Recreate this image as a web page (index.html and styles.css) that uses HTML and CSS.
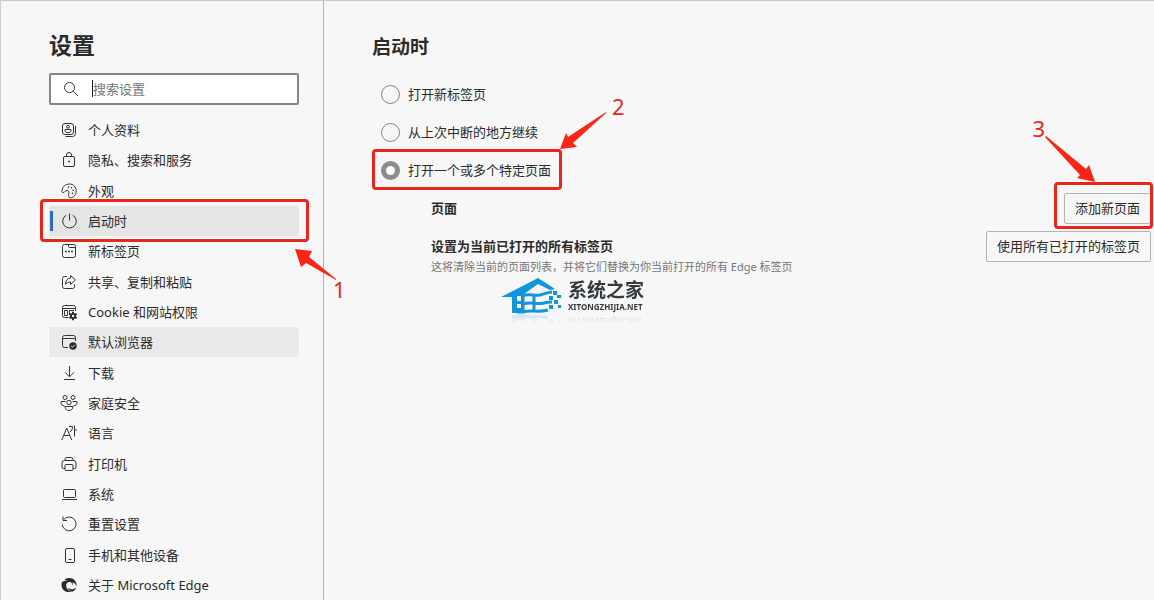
FILE: index.html
```
<!DOCTYPE html>
<html lang="zh-CN">
<head>
    <meta charset="UTF-8">
    <meta name="viewport" content="width=device-width, initial-scale=1.0">
    <title>设置</title>
    <link rel="stylesheet" href="styles.css">
</head>
<body>
    <div class="page">
        <!-- Sidebar -->
        <aside class="sidebar">
            <h1 class="sidebar-title">设置</h1>
            <label class="search">
                <svg class="icon" viewBox="0 0 16 16" aria-hidden="true"><circle cx="6.5" cy="6.5" r="5"/><path d="M10.2 10.2 15 15"/></svg>
                <input type="text" placeholder="搜索设置" aria-label="搜索设置">
            </label>
            <nav class="menu">
                <a class="menu-item" href="#">
                    <svg class="icon" viewBox="0 0 16 16"><rect x="1.5" y="1.5" width="11" height="11" rx="2.5"/><circle cx="7" cy="4.8" r="1.4"/><path d="M4 7.5h6v1.2c0 2.6-6 2.6-6 0zM14.5 4v7.5a3 3 0 0 1-3 3H4.5"/></svg>
                    个人资料
                </a>
                <a class="menu-item" href="#">
                    <svg class="icon" viewBox="0 0 16 16"><rect x="2.500" y="4.500" width="11" height="10" rx="1.500"/><path d="M5.500 4.500V3a2.500 2.500 0 0 1 5 0v1.500"/><circle class="solid" cx="8" cy="9.500" r=".9"/></svg>
                    隐私、搜索和服务
                </a>
                <a class="menu-item" href="#">
                    <svg class="icon" viewBox="0 0 16 16"><path d="M1 7.500C1.500 3.500 4.500 1 8.500 1c4 0 6.700 3 6.700 6.800 0 4-2.700 7-5.500 7-2.400 0-2.400-1.900-1.900-3.700.5-1.900-.2-3.400-1.700-3.600C4.200 7.200 3.600 9.700 2.200 9.700 1.300 9.700.9 8.700 1 7.500z"/><circle class="solid" cx="7.500" cy="4" r=".8"/><circle class="solid" cx="10.500" cy="4.800" r=".8"/><circle class="solid" cx="12.200" cy="7.300" r=".8"/><circle class="solid" cx="11.500" cy="10.200" r=".8"/></svg>
                    外观
                </a>
                <a class="menu-item active" href="#">
                    <svg class="icon" viewBox="0 0 16 16"><path d="M8.500.5v7M5.300 2.200a6.800 6.800 0 1 0 6.400 0"/></svg>
                    启动时
                    <span class="mark-box mark-box-1"></span>
                    <svg class="arrow arrow-1" viewBox="0 0 44 33"><path d="M1 1l17 2-3 6 27 22v1L12 15l-5 4z"/></svg>
                    <span class="mark-num mark-num-1">1</span>
                </a>
                <a class="menu-item" href="#">
                    <svg class="icon" viewBox="0 0 16 16"><rect x="1.500" y="1.500" width="13" height="13" rx="2"/><path d="M7.500 1.500v2q0 1 1 1h6"/><circle class="solid" cx="5" cy="8.500" r=".9"/><circle class="solid" cx="8" cy="8.500" r=".9"/><circle class="solid" cx="11" cy="8.500" r=".9"/></svg>
                    新标签页
                </a>
                <a class="menu-item" href="#">
                    <svg class="icon" viewBox="0 0 16 16"><path d="M6 2.500H3.500a2 2 0 0 0-2 2v8a2 2 0 0 0 2 2h8a2 2 0 0 0 2-2v-2M9.500 1.500l5 4.500-5 4.500V8C7 8 5.500 8.800 4.500 10.500 4.500 6.500 6.500 4.200 9.500 4z"/></svg>
                    共享、复制和粘贴
                </a>
                <a class="menu-item" href="#">
                    <svg class="icon" viewBox="0 0 16 16"><path d="M7.500 13.500h-4a2 2 0 0 1-2-2v-8a2 2 0 0 1 2-2h9a2 2 0 0 1 2 2V7M1.500 4.500h13M3.500 6.500h3v5h-3zM8.500 11V6.500H13"/><circle class="solid" cx="12" cy="12" r="3"/><path class="teeth" d="M12 7.800v8.400M8.400 9.900l7.200 4.200M8.400 14.100l7.200-4.200"/><circle class="hole" cx="12" cy="12" r="1.200"/></svg>
                    Cookie 和网站权限
                </a>
                <a class="menu-item hover" href="#">
                    <svg class="icon" viewBox="0 0 16 16"><path d="M7 13.500H3.500a2 2 0 0 1-2-2v-8a2 2 0 0 1 2-2h9a2 2 0 0 1 2 2V7M1.500 4.500h13"/><circle class="solid" cx="12" cy="12" r="3.700"/><path class="tick" d="M10.200 12l1.300 1.300 2.400-2.600"/></svg>
                    默认浏览器
                </a>
                <a class="menu-item" href="#">
                    <svg class="icon" viewBox="0 0 16 16"><path d="M8.500 1v10.500M4 7.300l4.500 4.500L13 7.300M3 14.500h11"/></svg>
                    下载
                </a>
                <a class="menu-item" href="#">
                    <svg class="icon icon-wide" viewBox="0 0 18 16"><circle cx="5" cy="2.500" r="2"/><circle cx="13" cy="2.500" r="2"/><circle cx="9" cy="7.500" r="2.200"/><path d="M5.500 6.500H1v1c0 2 1.300 3.300 3.500 3.300M12.500 6.500H17v1c0 2-1.300 3.300-3.500 3.300M5 11.500h8c0 5.300-8 5.300-8 0z"/></svg>
                    家庭安全
                </a>
                <a class="menu-item" href="#">
                    <svg class="icon" viewBox="0 0 16 16"><path d="M.8 15 5.700 3l5 12M2.500 10.500H9M8 1.500h3.500c0 3-.8 4.500-2.800 5.500M13.500.5v11M13.500 5H16"/></svg>
                    语言
                </a>
                <a class="menu-item" href="#">
                    <svg class="icon" viewBox="0 0 16 16"><path d="M4 12.500H2.500a1.500 1.500 0 0 1-1.500-1.500V7a2.500 2.500 0 0 1 2.500-2.500h9A2.500 2.500 0 0 1 15 7v4a1.500 1.500 0 0 1-1.500 1.500H12M4 4.500v-1a2 2 0 0 1 2-2h4a2 2 0 0 1 2 2v1"/><rect x="4" y="8.500" width="8" height="6" rx="1"/></svg>
                    打印机
                </a>
                <a class="menu-item" href="#">
                    <svg class="icon" viewBox="0 0 16 16"><rect x="2.500" y="3.500" width="12" height="8" rx="1"/><path d="M1 13.500h15"/></svg>
                    系统
                </a>
                <a class="menu-item" href="#">
                    <svg class="icon" viewBox="0 0 16 16"><path d="M2 .5v4h4M2.500 4a6.900 6.900 0 1 1-1.200 4.500"/></svg>
                    重置设置
                </a>
                <a class="menu-item" href="#">
                    <svg class="icon" viewBox="0 0 16 16"><rect x="4.500" y="1.500" width="9" height="14" rx="1.500"/><path d="M7.500 12.500h3"/></svg>
                    手机和其他设备
                </a>
                <a class="menu-item" href="#">
                    <svg class="icon" viewBox="0 0 16 16"><path class="solid" d="M3.500 2.600C7 .2 12 .5 14.500 4.400c1 1.700 1.200 3.200.9 4.800-.8-2.300-2.200-3.500-4-3.700.6 1 .7 2 .4 3C11 5.500 8 3.500 3.500 2.600zM1 5c3-2.200 6.200-2 8.300-.2-2.800.1-4.300 1.700-4.200 3.800 0 2.500 2 5.200 5.400 6.200C5.500 16 1.500 13.500.7 9.500.4 7.700.5 6.300 1 5zM15.200 10.500c-.7 2.200-2.200 3.600-4 4.200-2.300-.7-3.700-2-4.300-3.600 2.700 1.700 6 1.500 8.300-.6z"/></svg>
                    关于 Microsoft Edge
                </a>
            </nav>
        </aside>

        <!-- Startup settings -->
        <main class="content">
            <h2 class="content-title">启动时</h2>
            <label class="radio-row"><input type="radio" name="startup">打开新标签页</label>
            <label class="radio-row"><input type="radio" name="startup">从上次中断的地方继续</label>
            <label class="radio-row">
                <input type="radio" name="startup" checked>打开一个或多个特定页面
                <span class="mark-box mark-box-2"></span>
                <svg class="arrow arrow-2" viewBox="0 0 48 38"><path d="M1 37l6-16 2 4L47 0v1L14 31l4 4z"/></svg>
                <span class="mark-num mark-num-2">2</span>
            </label>

            <div class="setting-row">
                <h3 class="setting-title">页面</h3>
                <div class="button-wrap">
                    <button type="button">添加新页面</button>
                    <span class="mark-box mark-box-3"></span>
                    <svg class="arrow arrow-3" viewBox="0 0 52 47"><path d="M51 46 45 29l-3 4L2 0 1 1l35 38-3 3z"/></svg>
                    <span class="mark-num mark-num-3">3</span>
                </div>
            </div>
            <div class="setting-row">
                <div class="setting-text">
                    <h3 class="setting-title">设置为当前已打开的所有标签页</h3>
                    <p class="setting-desc">这将清除当前的页面列表，并将它们替换为你当前打开的所有 Edge 标签页</p>
                    <!-- Watermark -->
                    <div class="watermark">
                        <svg class="watermark-logo" viewBox="0 0 62 38">
                            <path d="M0 19 37 0l17 11-5 1-12-6-14 10v19H11V19z"/>
                            <path class="lines" d="M21 18c7-3 12 0 18-1 5-1 8-3 12-3M16 26h6c8-3 14 1 21-1 3-1 5-1 8-1M16 34h6c8-3 14 1 25-2M22 17v18M33 17v16"/>
                            <path class="cut" d="M16 18h4v5h-4zM16 26h4v4h-4z"/>
                            <path d="M52 13h4v4h-4zM48 18h4v4h-4zM56 17h4v3h-4zM53 22h4v4h-4zM48 27h4v4h-4zM57 27h3v3h-3z"/>
                        </svg>
                        <div class="watermark-text">
                            <span class="watermark-name">系统之家</span>
                            <span class="watermark-site">XITONGZHIJIA.NET</span>
                        </div>
                    </div>
                </div>
                <div class="button-wrap">
                    <button type="button">使用所有已打开的标签页</button>
                </div>
            </div>
        </main>
    </div>
</body>
</html>
```
FILE: styles.css
```
* {
    box-sizing: border-box;
    margin: 0;
    padding: 0;
}

body {
    font-family: "Noto Sans", "Noto Sans CJK SC", sans-serif;
    font-size: 13px;
    line-height: 20px;
    background: #f7f7f7;
    color: #2b2b2b;
}

.page {
    display: flex;
    min-height: 100vh;
    border-top: 1px solid #c8c8c8;
    border-left: 1px solid #d0d0d0;
}

/* Sidebar */
.sidebar {
    display: flex;
    flex-direction: column;
    flex: 0 0 323px;
    padding: 28px 24px 0 48px;
    border-right: 1px solid #b4b4b4;
}

.sidebar-title {
    font-size: 23px;
    line-height: 32px;
    margin-bottom: 12px;
}

.search {
    position: relative;
    display: flex;
    align-items: center;
    gap: 14px;
    height: 32px;
    padding-left: 12px;
    margin-bottom: 10px;
    border: 2px solid #858585;
    border-radius: 2px;
    background: #fff;
}

.search input {
    flex: 1;
    min-width: 0;
    border: none;
    outline: none;
    background: none;
    font: inherit;
    color: #2b2b2b;
}

.search input::placeholder {
    color: #757575;
}

/* Text caret */
.search::after {
    content: "";
    position: absolute;
    left: 41px;
    top: 5px;
    width: 1px;
    height: 17px;
    background: #222;
}

.menu {
    display: flex;
    flex-direction: column;
    flex: 1;
    justify-content: space-between;
}

.menu-item {
    position: relative;
    display: flex;
    align-items: center;
    gap: 11px;
    height: 30px;
    padding-left: 12px;
    border-radius: 2px;
    color: inherit;
    text-decoration: none;
}

.menu-item.hover {
    background: #eaeaea;
}

.menu-item.active {
    background: #e5e5e5;
}

.menu-item.active::before {
    content: "";
    position: absolute;
    left: 1px;
    top: 5px;
    width: 3px;
    height: 20px;
    background: #2a6cc0;
}

/* Icons */
.icon {
    flex: none;
    width: 16px;
    height: 16px;
    fill: none;
    stroke: #333;
    stroke-width: 1;
    overflow: visible;
}

.icon-wide {
    width: 18px;
    margin: 0 -1px;
}

.icon .solid {
    fill: #2b2b2b;
    stroke: none;
}

.icon .teeth {
    stroke: #2b2b2b;
    stroke-width: 2;
}

.icon .hole {
    fill: #f7f7f7;
    stroke: none;
}

.icon .tick {
    stroke: #eaeaea;
}

/* Content */
.content {
    flex: 1;
    min-width: 0;
    padding: 32px 3px 0 48px;
}

.content-title {
    font-size: 19px;
    line-height: 28px;
    margin-bottom: 14px;
}

.radio-row {
    position: relative;
    display: flex;
    align-items: center;
    gap: 8px;
    width: fit-content;
    height: 38px;
    margin-left: 9px;
}

.radio-row input {
    appearance: none;
    width: 19px;
    height: 19px;
    border: 1px solid #858585;
    border-radius: 50%;
}

.radio-row input:checked {
    border: 5px solid #8c8c8c;
    background: #fff;
}

.setting-row {
    display: flex;
    justify-content: space-between;
    align-items: flex-start;
    min-height: 38px;
    padding-left: 59px;
}

.setting-text {
    position: relative;
}

.setting-title {
    font-size: 13px;
    line-height: 38px;
}

.setting-desc {
    font-size: 11px;
    line-height: 16px;
    margin-top: -6px;
    color: #757575;
}

.button-wrap {
    position: relative;
    display: flex;
    align-items: center;
    height: 38px;
}

button {
    height: 31px;
    padding: 0 10px;
    border: 1px solid #b4b4b4;
    border-radius: 2px;
    background: #f7f7f7;
    font: inherit;
    color: inherit;
}

/* Red step marks */
.mark-box {
    position: absolute;
    border: 3px solid #e8261c;
    border-radius: 4px;
}

.mark-box-1 {
    inset: -7px -10px -6px -9px;
}

.mark-box-2 {
    inset: -2px -11px -1px -9px;
}

.mark-box-3 {
    inset: -7px -2px -2px -10px;
}

.arrow {
    position: absolute;
    fill: #fb2415;
}

.arrow-1 {
    left: 245px;
    top: 42px;
    width: 44px;
    height: 33px;
}

.arrow-2 {
    left: 178px;
    top: -39px;
    width: 48px;
    height: 38px;
}

.arrow-3 {
    right: 55px;
    top: -53px;
    width: 52px;
    height: 47px;
}

.mark-num {
    position: absolute;
    font-size: 22px;
    line-height: 24px;
    color: #e8261c;
}

.mark-num-1 {
    left: 284px;
    top: 71px;
}

.mark-num-2 {
    left: 231px;
    top: -57px;
}

.mark-num-3 {
    right: 106px;
    top: -73px;
}

/* Watermark */
.watermark {
    position: absolute;
    left: 70px;
    top: 51px;
    display: flex;
    gap: 5px;
    -webkit-box-reflect: below -4px linear-gradient(transparent 70%, rgba(0, 0, 0, 0.25));
}

.watermark-logo {
    width: 62px;
    height: 38px;
    fill: #1296db;
}

.watermark-logo .lines {
    fill: none;
    stroke: #1296db;
    stroke-width: 3;
}

.watermark-logo .cut {
    fill: #f7f7f7;
}

.watermark-text {
    display: flex;
    flex-direction: column;
    font-weight: bold;
    color: #333a40;
}

.watermark-name {
    font-size: 19px;
    line-height: 24px;
}

.watermark-site {
    font-size: 8px;
    line-height: 10px;
}
```
